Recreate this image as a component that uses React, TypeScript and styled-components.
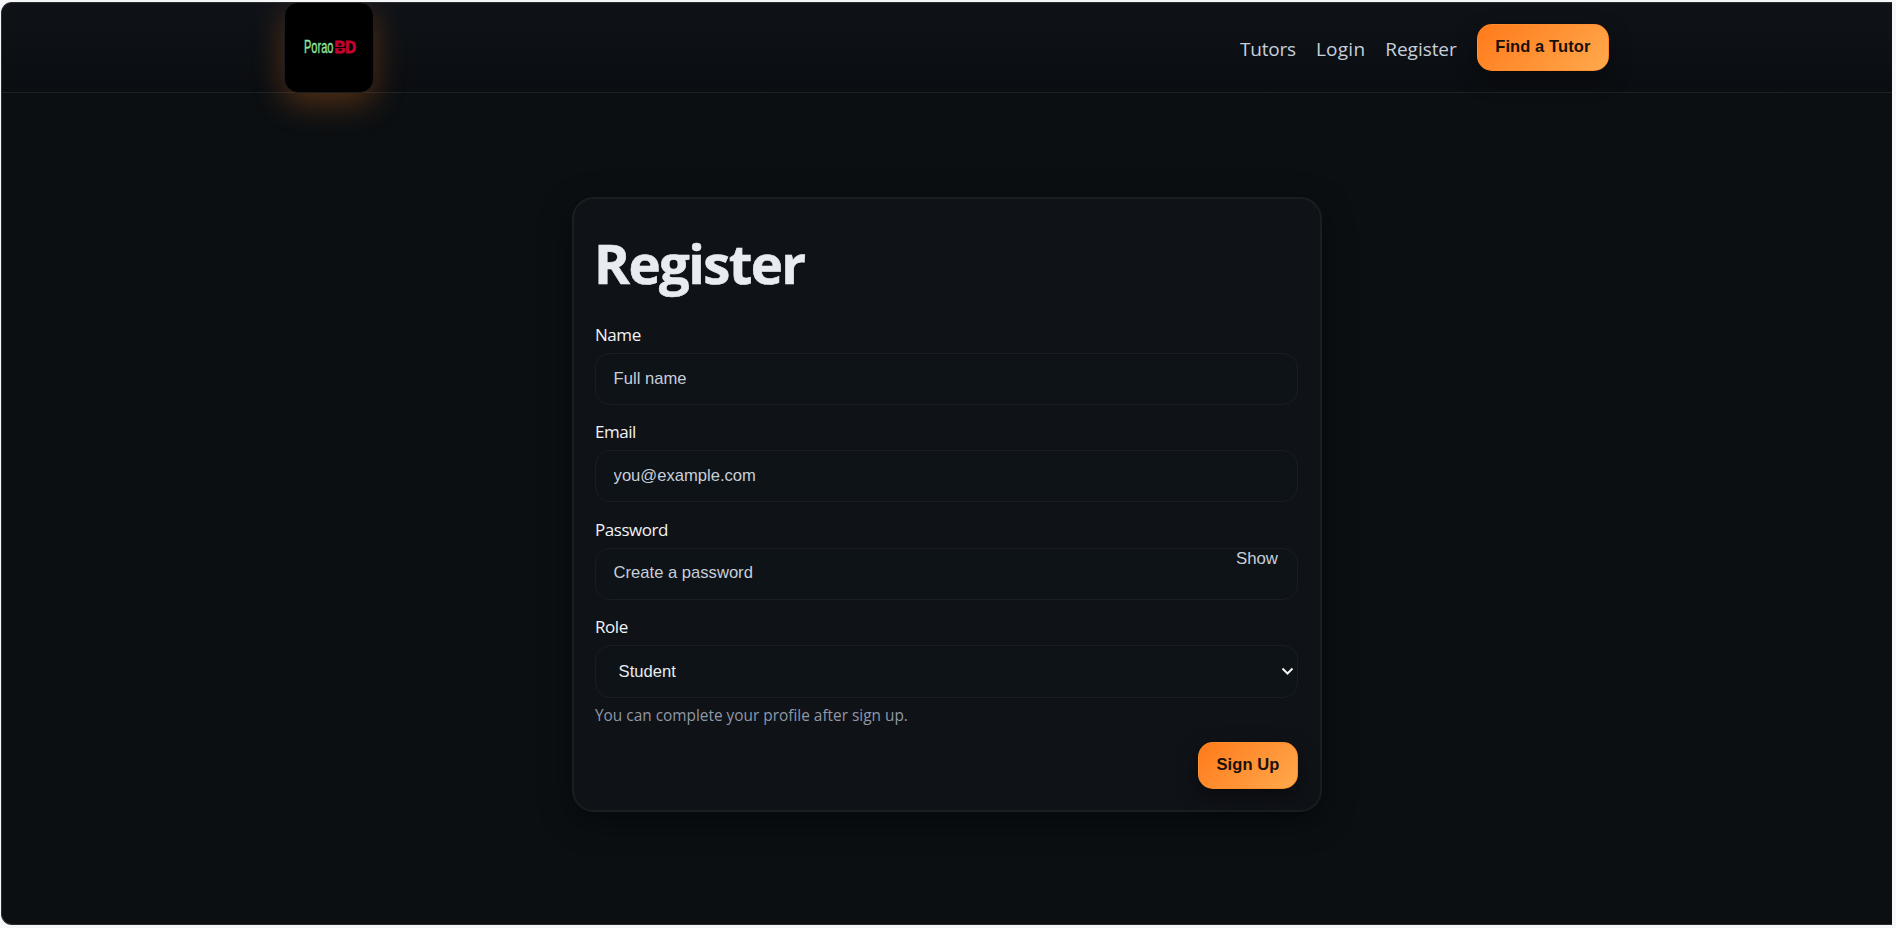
import React, { useState } from 'react';
import styled, { createGlobalStyle } from 'styled-components';

const GlobalStyle = createGlobalStyle`
  * {
    box-sizing: border-box;
  }
  body {
    margin: 0;
    background: #f6f7f8;
    font-family: 'Open Sans', 'Noto Sans', sans-serif;
    color: #e8ecf1;
  }
`;

const Page = styled.div`
  width: 1891px;
  height: 923px;
  margin: 2px 0 0 1px;
  border: 1px solid #2a2d30;
  border-right: 0;
  border-radius: 11px 0 0 11px;
  background: #0b0f12;
  overflow: hidden;
`;

const Header = styled.header`
  height: 90px;
  border-bottom: 1px solid #1e2224;
  background: linear-gradient(180deg, #0f1318, #0a0d11);
`;

const HeaderInner = styled.div`
  width: 1325px;
  height: 89px;
  margin-left: 282px;
  display: flex;
  align-items: center;
  justify-content: space-between;
`;

const Logo = styled.a`
  width: 90px;
  height: 91px;
  display: block;
  border-radius: 14px;
  border: 1px solid #1b1d1e;
  background: #000;
  box-shadow: 0 10px 32px rgba(255, 122, 26, 0.3);

  svg {
    display: block;
  }
`;

const Nav = styled.nav`
  display: flex;
  align-items: center;
`;

type NavLinkProps = {
  $spacing?: string;
};

const NavLink = styled.a<NavLinkProps>`
  margin: 2px 20px 0 0;
  font-size: 19px;
  line-height: 26px;
  letter-spacing: ${props => props.$spacing ?? '-0.2px'};
  color: #c7cfdb;
`;

const Button = styled.button`
  height: 47px;
  padding: 0 17.5px 2px;
  border: 1px solid rgba(255, 140, 40, 0.7);
  border-radius: 15px;
  background: linear-gradient(135deg, #ff7a1a, #ffa94d);
  box-shadow: 0 8px 22px rgba(0, 0, 0, 0.4);
  font-family: 'Liberation Sans', Arial, sans-serif;
  font-size: 16.5px;
  font-weight: 700;
  letter-spacing: 0.1px;
  color: #1b1009;
  white-space: nowrap;
`;

const Card = styled.form`
  width: 750px;
  height: 615px;
  margin: 104px 0 0 570px;
  padding: 36px 22px 0 21px;
  border: 2px solid #1a1e21;
  border-radius: 22px;
  background: #0f1217;
  box-shadow: 0 9px 33px rgba(0, 0, 0, 0.4);
`;

const Title = styled.h1`
  margin: 0 0 0 -1px;
  height: 87px;
  font-size: 54.5px;
  line-height: 56px;
  font-weight: 700;
  letter-spacing: -1.6px;
  -webkit-text-stroke: 0.6px #e8ecf1;
`;

const Field = styled.div`
  height: 97.4px;
`;

const Label = styled.label`
  display: block;
  height: 31px;
  font-size: 17px;
  line-height: 26px;
  letter-spacing: -0.45px;
  color: #f1f3f5;
`;

const Control = styled.div`
  position: relative;
`;

const Input = styled.input`
  display: block;
  width: 100%;
  height: 52px;
  padding: 0 17.6px 1px;
  border: 1px solid #1a1e22;
  border-radius: 15px;
  background: #0e1317;
  font-family: 'Liberation Sans', Arial, sans-serif;
  font-size: 16.6px;
  color: #e8ecf1;
  outline: none;

  &::placeholder {
    color: #c7cfdb;
    opacity: 1;
  }
`;

const Select = styled(Input).attrs({ as: 'select' })`
  height: 53px;
  padding: 0 22.6px 1px;
  appearance: none;
`;

const ShowButton = styled.button`
  position: absolute;
  top: 1px;
  right: 20px;
  padding: 0;
  border: 0;
  background: none;
  font-family: 'Liberation Sans', Arial, sans-serif;
  font-size: 16.8px;
  line-height: 20px;
  color: #c7cfdb;
`;

const Chevron = styled.svg`
  position: absolute;
  top: 22px;
  right: 4px;
`;

const Hint = styled.p`
  margin: 0;
  height: 43.4px;
  padding-top: 6px;
  font-size: 15.4px;
  line-height: 24px;
  color: #8f98a6;
`;

const Actions = styled.div`
  display: flex;
  justify-content: flex-end;
`;

const App = () => {
  const [showPassword, setShowPassword] = useState(false);

  return (
    <>
      <GlobalStyle />
      <Page>
        <Header>
          <HeaderInner>
            <Logo>
              <svg width="88" height="89" viewBox="0 0 88 89">
                <text
                  transform="translate(19 50) scale(0.6 1)"
                  fontFamily="'Liberation Sans', sans-serif"
                  fontSize="18"
                  fill="#8fe39a"
                  stroke="#8fe39a"
                  strokeWidth="0.4"
                  textLength="49"
                  lengthAdjust="spacingAndGlyphs"
                >
                  Porao
                </text>
                <text
                  x="49.5"
                  y="50"
                  fontFamily="'Liberation Sans', sans-serif"
                  fontSize="16"
                  fontWeight="700"
                  fill="#c8002f"
                  stroke="#c8002f"
                  strokeWidth="0.8"
                  textLength="21.5"
                  lengthAdjust="spacingAndGlyphs"
                >
                  BD
                </text>
                <path d="M49 44.5h11" stroke="#000" strokeWidth="1" />
              </svg>
            </Logo>
            <Nav>
              <NavLink>Tutors</NavLink>
              <NavLink $spacing="0.25px">Login</NavLink>
              <NavLink $spacing="-0.05px">Register</NavLink>
              <Button type="button">Find a Tutor</Button>
            </Nav>
          </HeaderInner>
        </Header>
        <Card>
          <Title>Register</Title>
          <Field>
            <Label>Name</Label>
            <Input placeholder="Full name" />
          </Field>
          <Field>
            <Label>Email</Label>
            <Input type="email" placeholder="you@example.com" />
          </Field>
          <Field>
            <Label>Password</Label>
            <Control>
              <Input type={showPassword ? 'text' : 'password'} placeholder="Create a password" />
              <ShowButton type="button" onClick={() => setShowPassword(!showPassword)}>
                {showPassword ? 'Hide' : 'Show'}
              </ShowButton>
            </Control>
          </Field>
          <Label>Role</Label>
          <Control>
            <Select>
              <option>Student</option>
              <option>Tutor</option>
            </Select>
            <Chevron width="13" height="9" viewBox="0 0 13 9" fill="none" stroke="#f1f3f5" strokeWidth="2">
              <path d="M1.5 1.5l5 5 5-5" />
            </Chevron>
          </Control>
          <Hint>You can complete your profile after sign up.</Hint>
          <Actions>
            <Button type="button">Sign Up</Button>
          </Actions>
        </Card>
      </Page>
    </>
  );
};

export default App;
